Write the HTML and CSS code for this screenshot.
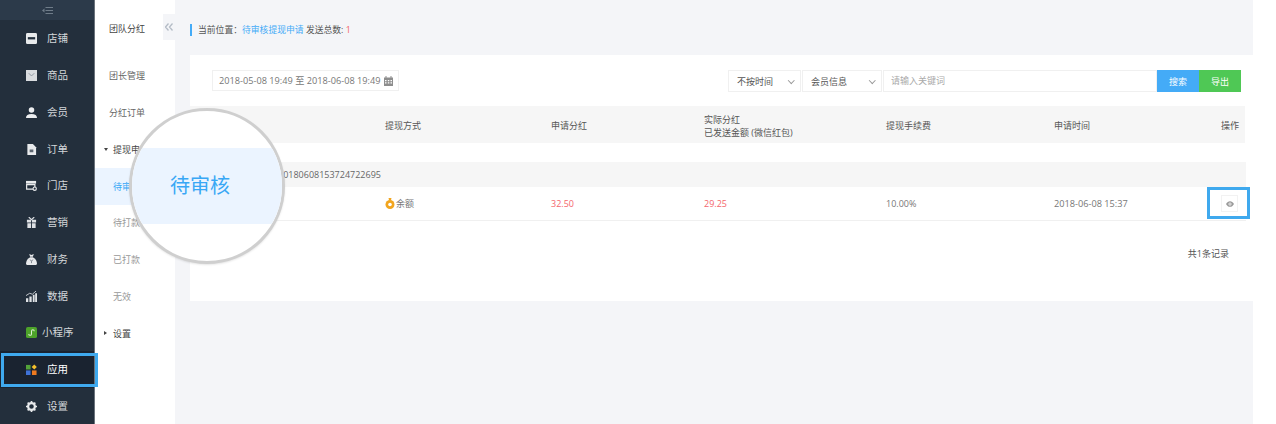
FILE: index.html
```html
<!DOCTYPE html>
<html lang="en">
<head>
  <meta charset="UTF-8">
  <title>待审核提现申请</title>
  <link rel="stylesheet" href="styles.css">
</head>
<body>
  <div class="app">
    <!-- Main Sidebar -->
    <aside class="sidebar">
      <div class="sidebar-top">
        <svg width="11" height="7" viewBox="0 0 11 7"><path d="M0 3.500l2.500-2v4z" fill="#6f7c89"/><path d="M3.500 .5H11M3.500 3.500H11M3.500 6.500H11" stroke="#6f7c89" stroke-width="1"/></svg>
      </div>
      <a class="side-item">
        <svg class="side-icon" viewBox="0 0 12 12"><path d="M1.500 0h9A1.500 1.500 0 0 1 12 1.500v9a1.500 1.500 0 0 1-1.500 1.500h-9A1.500 1.500 0 0 1 0 10.500v-9A1.500 1.500 0 0 1 1.500 0z" fill="#e8eaec"/><path d="M2 4.500h8v2.500H2z" fill="#232f3c"/></svg>
        <span>店铺</span>
      </a>
      <a class="side-item">
        <svg class="side-icon" viewBox="0 0 12 12"><path d="M0 0h12v12H0z" fill="#d9dcdf"/><path d="M3 3.500l3 3 3-3" fill="none" stroke="#8a939c" stroke-width="1"/></svg>
        <span>商品</span>
      </a>
      <a class="side-item">
        <svg class="side-icon" viewBox="0 0 12 12"><circle cx="6" cy="3.200" r="3" fill="#eceef0"/><path d="M0 12c0-3 2-4.500 6-4.500s6 1.500 6 4.500z" fill="#eceef0"/></svg>
        <span>会员</span>
      </a>
      <a class="side-item">
        <svg class="side-icon" viewBox="0 0 12 12"><path d="M1.500 0h6l3.500 3.500V12H1.500z" fill="#e8eaec"/><path d="M4 6h4v3H4z" fill="#5d6670"/></svg>
        <span>订单</span>
      </a>
      <a class="side-item">
        <svg class="side-icon" viewBox="0 0 12 12"><path d="M0 1h11v3H0z" fill="#e8eaec"/><path d="M.700 5h9v5h-9z" fill="none" stroke="#e8eaec" stroke-width="1.300"/><circle cx="9.500" cy="9.500" r="1.800" fill="#232f3c" stroke="#e8eaec" stroke-width="1.200"/></svg>
        <span>门店</span>
      </a>
      <a class="side-item">
        <svg class="side-icon" viewBox="0 0 12 12"><path d="M1 3h10v3H1zM1.500 6.800h9V12h-9z" fill="#dfe2e5"/><path d="M6 3v9" stroke="#232f3c" stroke-width="1"/><path d="M3 0l3 3 3-3" fill="none" stroke="#dfe2e5" stroke-width="1.200"/></svg>
        <span>营销</span>
      </a>
      <a class="side-item">
        <svg class="side-icon" viewBox="0 0 12 12"><path d="M3.500 0l2.500 1 2.500-1-1 3h-3z" fill="#e8eaec"/><path d="M4.500 3.500h3C10.500 5 12 8 12 10.500 12 11.500 11 12 10 12H2c-1 0-2-.500-2-1.500C0 8 1.500 5 4.500 3.500z" fill="#e8eaec"/><path d="M4.500 6l1.500 2 1.500-2M6 8v2" fill="none" stroke="#6d7680" stroke-width=".9"/></svg>
        <span>财务</span>
      </a>
      <a class="side-item">
        <svg class="side-icon" viewBox="0 0 12 12"><path d="M0 8h2.500v4H0zM3.700 6h2.500v6H3.700zM7.400 4h2v8h-2zM10 2.500h2V12h-2z" fill="#dfe2e5"/><path d="M0 5l4-2.500 3 1L11 0" fill="none" stroke="#dfe2e5" stroke-width=".9"/></svg>
        <span>数据</span>
      </a>
      <a class="side-item side-item-mini">
        <svg class="side-icon" viewBox="0 0 12 12"><rect width="12" height="12" rx="2" fill="#4da32a"/><path d="M3 7.500a1.500 1.500 0 1 0 3 0v-3a1.500 1.500 0 1 1 3 0" fill="none" stroke="#dcefd2" stroke-width="1.100"/></svg>
        <span>小程序</span>
      </a>
      <a class="side-item side-item-active">
        <svg class="side-icon" viewBox="0 0 12 12"><path d="M0 1h5v5H0z" fill="#53a33a"/><path d="M9 .500l2.800 2.800L9 6.100 6.200 3.300z" fill="#f5c02c"/><path d="M0 7h5v5H0z" fill="#3f72d8"/><path d="M6.500 7h5v5h-5z" fill="#ee7a20"/></svg>
        <span>应用</span>
      </a>
      <a class="side-item">
        <svg class="side-icon" viewBox="0 0 12 12"><circle cx="6" cy="6" r="3.700" fill="none" stroke="#e8eaec" stroke-width="2.400"/><path d="M6 0v12M0 6h12M1.800 1.800l8.400 8.400M10.200 1.800l-8.400 8.400" stroke="#e8eaec" stroke-width="1.800" stroke-dasharray="2 8 2 0"/></svg>
        <span>设置</span>
      </a>
    </aside>

    <!-- Secondary Nav -->
    <nav class="subnav">
      <div class="subnav-title">团队分红</div>
      <a class="subnav-item">团长管理</a>
      <a class="subnav-item">分红订单</a>
      <a class="subnav-item subnav-group"><i class="caret-down"></i>提现申请</a>
      <a class="subnav-item subnav-child subnav-active">待审核</a>
      <a class="subnav-item subnav-child">待打款</a>
      <a class="subnav-item subnav-child">已打款</a>
      <a class="subnav-item subnav-child">无效</a>
      <a class="subnav-item subnav-group"><i class="caret-right"></i>设置</a>
      <div class="collapse-tab">
        <svg width="8" height="8" viewBox="0 0 8 8"><path d="M3.500 .500L.500 4l3 3.500M7.500 .500L4.500 4l3 3.500" fill="none" stroke="#b4bcc6" stroke-width="1.300"/></svg>
      </div>
    </nav>

    <!-- Content -->
    <main class="content">
      <div class="crumb">
        <span>当前位置：</span><span class="link">待审核提现申请</span>
        <span>发送总数:</span> <span class="red">1</span>
      </div>

      <section class="card">
        <div class="filters">
          <div class="date-range">
            <span>2018-05-08 19:49 至 2018-06-08 19:49</span>
            <svg width="9" height="10" viewBox="0 0 9 10"><path d="M0 1.500h9V10H0z" fill="#8d8d8d"/><path d="M2 0v2M7 0v2" stroke="#8d8d8d"/><path d="M1 4h1.500v1.200H1zM3.800 4h1.500v1.200H3.800zM6.500 4H8v1.200H6.500zM1 6.200h1.500v1.200H1zM3.800 6.200h1.500v1.200H3.800zM6.500 6.200H8v1.200H6.500z" fill="#fff"/></svg>
          </div>
          <div class="search">
            <div class="select select-time">不按时间<i class="chev"></i></div>
            <div class="select select-member">会员信息<i class="chev"></i></div>
            <div class="keyword">请输入关键词</div>
            <button class="btn btn-search">搜索</button>
            <button class="btn btn-export">导出</button>
          </div>
        </div>

        <div class="row table-head">
          <div class="col col-a">提现单号</div>
          <div class="col col-b">提现方式</div>
          <div class="col col-c">申请分红</div>
          <div class="col col-d">实际分红<br>已发送金额 (微信红包)</div>
          <div class="col col-e">提现手续费</div>
          <div class="col col-f">申请时间</div>
          <div class="col col-g">操作</div>
        </div>

        <div class="order-no">提现单号：20180608153724722695</div>

        <div class="row table-row">
          <div class="col col-a"></div>
          <div class="col col-b pay">
            <svg width="10" height="11" viewBox="0 0 10 11"><path d="M3.500 0h3L6 2.200H4z" fill="#f2a51e"/><circle cx="5" cy="6.500" r="4.500" fill="#f2a51e"/><circle cx="5" cy="6.500" r="1.800" fill="#fff"/></svg>
            余额
          </div>
          <div class="col col-c red">32.50</div>
          <div class="col col-d red">29.25</div>
          <div class="col col-e">10.00%</div>
          <div class="col col-f col-time">2018-06-08 15:37</div>
          <div class="col col-g">
            <span class="view-btn">
              <svg width="8" height="6" viewBox="0 0 10 7"><path d="M0 3.500C1.500 1 3 0 5 0s3.500 1 5 3.500C8.500 6 7 7 5 7S1.500 6 0 3.500z" fill="#999"/><circle cx="5" cy="3.500" r="1.900" fill="#fff"/><circle cx="5" cy="3.500" r="1" fill="#999"/></svg>
            </span>
          </div>
        </div>

        <div class="pager">共1条记录</div>
      </section>
    </main>

    <!-- Overlays -->
    <div class="highlight highlight-side"></div>
    <div class="highlight highlight-view"></div>
    <div class="magnifier">
      <div class="magnifier-band">待审核</div>
    </div>
  </div>
</body>
</html>
```

FILE: styles.css
```css
/* General Styles */
html, body {
  margin: 0;
  padding: 0;
  height: 100%;
  overflow: hidden;
}

body {
  font-family: "Open Sans", "Noto Sans CJK SC", sans-serif;
  font-size: 9px;
  line-height: 13px;
  color: #555;
  background: #fff;
}

.app {
  position: relative;
  display: flex;
  width: 1276px;
  height: 424px;
  overflow: hidden;
}

/* Main Sidebar */
.sidebar {
  width: 94px;
  flex-shrink: 0;
  background: #232f3c;
  border-right: 1px solid #6b737c;
}

.sidebar-top {
  height: 20px;
  background: #2c3a4a;
  display: flex;
  align-items: center;
  justify-content: center;
}

.side-item {
  display: flex;
  align-items: center;
  box-sizing: border-box;
  height: 36.750px;
  padding: 1px 0 0 26px;
  gap: 10px;
  color: #d4d7da;
  font-size: 10.500px;
}

.side-icon {
  width: 11px;
  height: 11px;
  flex-shrink: 0;
}

.side-item-mini {
  gap: 5px;
}

.side-item-active {
  background: #1a2330;
  color: #fff;
}

/* Secondary Nav */
.subnav {
  position: relative;
  width: 80px;
  flex-shrink: 0;
  background: #fff;
  padding-top: 9px;
}

.subnav-title {
  height: 40px;
  line-height: 40px;
  padding-left: 14px;
  color: #444;
}

.subnav-item {
  display: flex;
  align-items: center;
  height: 36.750px;
  padding-left: 14px;
  color: #666;
}

.subnav-title + .subnav-item {
  margin-top: 8.500px;
}

.subnav-group {
  padding-left: 9px;
  color: #444;
}

.subnav-child {
  padding-left: 18px;
  color: #999;
}

.subnav-active {
  background: #ebf4ff;
  color: #38a7f5;
}

.caret-down {
  width: 0;
  height: 0;
  margin-right: 5px;
  border-left: 2.500px solid transparent;
  border-right: 2.500px solid transparent;
  border-top: 3px solid #444;
}

.caret-right {
  width: 0;
  height: 0;
  margin-right: 6px;
  border-top: 2.500px solid transparent;
  border-bottom: 2.500px solid transparent;
  border-left: 3px solid #444;
}

.collapse-tab {
  position: absolute;
  left: 68px;
  top: 14px;
  width: 12px;
  height: 26px;
  background: #f4f5f8;
  display: flex;
  align-items: center;
  justify-content: center;
}

/* Content */
.content {
  width: 1078px;
  flex-shrink: 0;
  padding-left: 15px;
  box-sizing: border-box;
  background: #f4f5f8;
}

.crumb {
  height: 12px;
  line-height: 12px;
  margin-top: 24px;
  padding-left: 6px;
  border-left: 2px solid #44abf7;
  font-size: 8.800px;
  color: #555;
}

.link {
  color: #44abf7;
}

.red {
  color: #f4666c;
}

.card {
  margin-top: 19px;
  height: 246px;
  background: #fff;
  padding: 15px 8px 0 0;
  box-sizing: border-box;
}

.filters {
  display: flex;
  justify-content: space-between;
  align-items: flex-start;
  padding-left: 22px;
  padding-right: 4px;
}

.date-range {
  display: flex;
  align-items: center;
  justify-content: space-between;
  box-sizing: border-box;
  width: 187px;
  height: 21px;
  padding: 0 5px 0 6px;
  border: 1px solid #f0f0f0;
  font-size: 9.200px;
  color: #777;
}

.search {
  display: flex;
  height: 22px;
}

.select {
  display: flex;
  align-items: center;
  justify-content: space-between;
  box-sizing: border-box;
  margin-right: 1px;
  padding: 0 7px 0 8px;
  border: 1px solid #f0f0f0;
  color: #555;
}

.select-time {
  width: 73px;
}

.select-member {
  width: 80px;
}

.chev {
  width: 3.500px;
  height: 3.500px;
  margin-top: -2px;
  border-right: 1px solid #999;
  border-bottom: 1px solid #999;
  transform: rotate(45deg);
}

.keyword {
  box-sizing: border-box;
  width: 274px;
  line-height: 20px;
  padding-left: 7px;
  border: 1px solid #f0f0f0;
  color: #aaa;
}

.btn {
  width: 42px;
  height: 22px;
  padding: 0;
  border: 0;
  color: #fff;
  font: inherit;
}

.btn-search {
  background: #44abf7;
}

.btn-export {
  background: #4fc855;
}

/* Table */
.row {
  display: flex;
  align-items: center;
}

.table-head {
  box-sizing: border-box;
  height: 37px;
  margin-top: 14px;
  padding-top: 2px;
  background: #f6f6f6;
  color: #555;
}

.order-no {
  height: 25px;
  line-height: 25px;
  margin: 19px -1px 0 0;
  padding-left: 43px;
  background: #f6f6f6;
  color: #666;
  white-space: nowrap;
}

.table-row {
  height: 33px;
  border-bottom: 1px solid #f0f0f0;
  margin-right: -1px;
  color: #777;
}

.col {
  flex-shrink: 0;
  box-sizing: border-box;
}

.col-a { width: 195px; }
.col-b { width: 166px; }
.col-c { width: 153px; }
.col-d { width: 182px; }
.col-e { width: 168px; }
.col-f { width: 167px; }
.col-g { flex: 1; }

.col-time {
  font-size: 9.200px;
}

.pay {
  display: flex;
  align-items: center;
  gap: 1px;
}

.view-btn {
  display: flex;
  align-items: center;
  justify-content: center;
  box-sizing: border-box;
  width: 17px;
  height: 17px;
  border: 1px solid #f2f2f2;
}

.pager {
  margin-top: 26px;
  padding-right: 16px;
  text-align: right;
  color: #555;
}

/* Overlays */
.highlight {
  position: absolute;
  box-sizing: border-box;
  border: 3px solid #3fa9ee;
}

.highlight-side {
  left: 1px;
  top: 353px;
  width: 97px;
  height: 34px;
}

.highlight-view {
  left: 1207px;
  top: 187px;
  width: 43px;
  height: 32px;
}

.magnifier {
  position: absolute;
  left: 129px;
  top: 108px;
  width: 156px;
  height: 156px;
  box-sizing: border-box;
  border: 3px solid #cfcfcf;
  border-radius: 50%;
  background: #fff;
  overflow: hidden;
  display: flex;
  align-items: center;
  box-shadow: 0 1px 2px rgba(0, 0, 0, 0.1);
}

.magnifier-band {
  width: 100%;
  height: 76px;
  line-height: 76px;
  background: #ebf4ff;
  color: #38a7f5;
  font-size: 20px;
  padding-left: 38px;
  box-sizing: border-box;
}
```
